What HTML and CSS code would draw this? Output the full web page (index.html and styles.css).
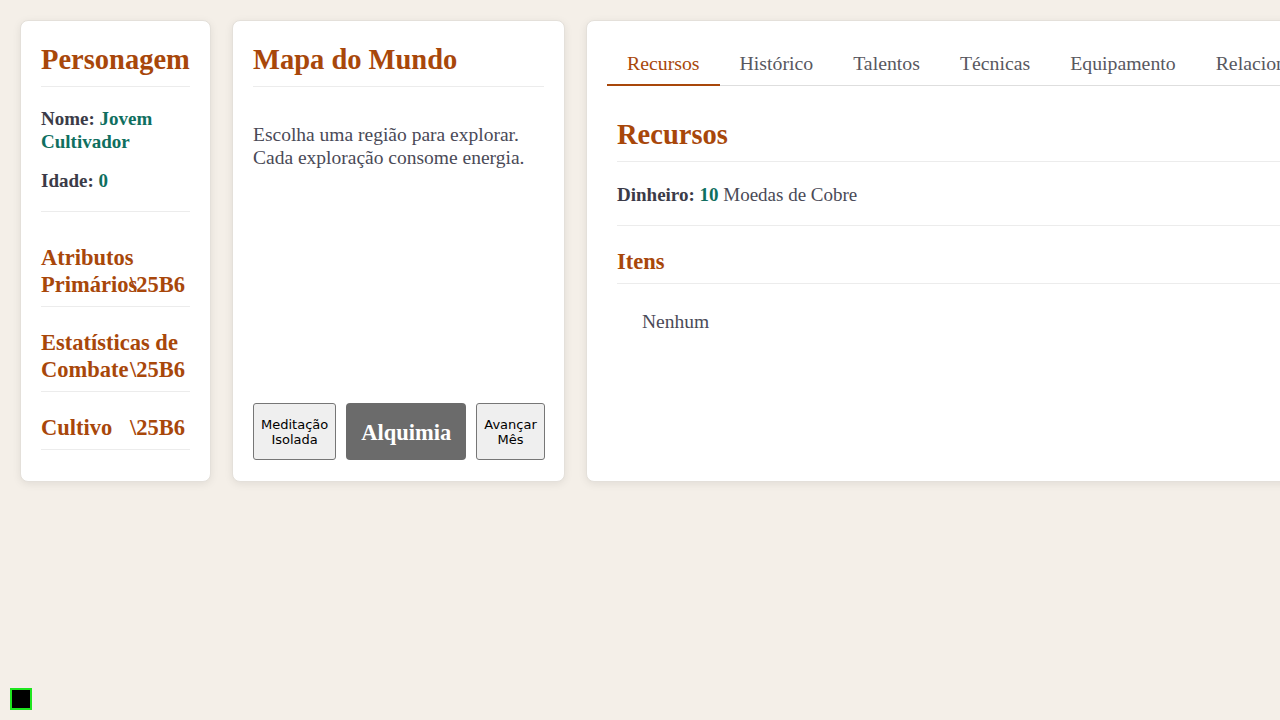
FILE: index.html
```html
<!DOCTYPE html>
<html lang="pt">
<head>
<meta charset="utf-8">
<title>Cultivo</title>
<link rel="stylesheet" href="styles.css">
</head>
<body>
<div class="layout">
  <aside class="card char">
    <h2 class="card-title">Personagem</h2>
    <div class="info">
      <p><b>Nome:</b> <span class="val">Jovem Cultivador</span></p>
      <p><b>Idade:</b> <span class="val">0</span></p>
    </div>
    <div class="section first"><h3>Atributos Primários</h3><span class="arrow">\25B6</span></div>
    <div class="section"><h3>Estatísticas de Combate</h3><span class="arrow">\25B6</span></div>
    <div class="section last"><h3>Cultivo</h3><span class="arrow">\25B6</span></div>
  </aside>

  <section class="card map">
    <h2 class="card-title">Mapa do Mundo</h2>
    <p class="map-text">Escolha uma região para explorar. Cada exploração consome energia.</p>
    <div class="actions">
      <button class="btn">Meditação<br>Isolada</button>
      <button class="btn-main">Alquimia</button>
      <button class="btn">Avançar<br>Mês</button>
    </div>
  </section>

  <main class="card panel">
    <nav class="tabs">
      <span class="tab active">Recursos</span>
      <span class="tab">Histórico</span>
      <span class="tab">Talentos</span>
      <span class="tab">Técnicas</span>
      <span class="tab">Equipamento</span>
      <span class="tab">Relacionamentos</span>
    </nav>
    <div class="tab-content">
      <h2 class="card-title big">Recursos</h2>
      <p class="money"><b>Dinheiro:</b> <span class="val">10</span> Moedas de Cobre</p>
      <h3 class="sub">Itens</h3>
      <ul class="items"><li>Nenhum</li></ul>
    </div>
  </main>
</div>
<div class="debug"></div>
</body>
</html>
```

FILE: styles.css
```css
html, body {
  margin: 0;
  padding: 0;
  background: #f4efe8;
  overflow: hidden;
  height: 100%;
}
body {
  font-family: "Liberation Serif", "Times New Roman", serif;
  font-size: 19px;
  color: #4a4a57;
}
.layout {
  display: grid;
  grid-template-columns: 191px 333px 760px;
  gap: 21px;
  padding: 20px;
  align-items: stretch;
}
.card {
  background: #fff;
  border: 1px solid #e4e0da;
  border-radius: 8px;
  box-shadow: 0 2px 8px rgba(0, 0, 0, 0.08);
  padding: 20px 20px 21px;
}
.card-title {
  margin: 0;
  font-size: 28.5px;
  line-height: 38px;
  font-weight: bold;
  color: #a8470a;
  padding-bottom: 7px;
  border-bottom: 1px solid #ececec;
}
b { color: #3b3b48; }
.val { color: #0f6f60; font-weight: bold; }
.info {
  margin-top: 20px;
  padding-bottom: 19px;
  border-bottom: 1px solid #ececec;
}
.info p {
  margin: 0 0 16px;
  line-height: 23px;
  font-weight: bold;
  color: #3b3b48;
}
.info p:last-child { margin-bottom: 0; }
.section {
  position: relative;
  margin-top: 22px;
  padding-bottom: 8px;
  border-bottom: 1px solid #ececec;
}
.section.first { margin-top: 32px; }
.section.last { margin-bottom: 10px; }
.section h3 {
  margin: 0;
  font-size: 22.5px;
  line-height: 27px;
  color: #a8470a;
}
.arrow {
  position: absolute;
  right: 5px;
  bottom: 8px;
  font-size: 22.5px;
  line-height: 27px;
  font-weight: bold;
  color: #a8470a;
}
.map {
  display: flex;
  flex-direction: column;
}
.map-text {
  margin: 36px 0 0;
  font-size: 19.5px;
  line-height: 23px;
}
.actions {
  margin-top: auto;
  display: flex;
  gap: 10px;
  align-items: stretch;
}
.btn {
  font-family: "DejaVu Sans", sans-serif;
  font-size: 13px;
  line-height: 15px;
  color: #000;
  background: #efefef;
  border: 1px solid #767676;
  border-radius: 3px;
  padding: 0 7px;
}
.btn-main {
  font-family: "Liberation Serif", serif;
  font-size: 22.5px;
  font-weight: bold;
  line-height: 25px;
  color: #fff;
  background: #6b6b6b;
  border: none;
  border-radius: 4px;
  padding: 17px 15px 15px;
}
.panel {
  padding-right: 0;
  overflow: hidden;
}
.tabs {
  display: flex;
  border-bottom: 1px solid #dedede;
  white-space: nowrap;
}
.tab {
  padding: 10px 20px 9px;
  line-height: 24px;
  font-size: 19.8px;
  color: #585860;
  border-bottom: 2px solid transparent;
  margin-bottom: -1px;
}
.tab.active {
  color: #a8470a;
  border-bottom-color: #a8470a;
}
.tab-content {
  padding: 30px 0 20px 10px;
}
.money {
  margin: 21px 0 0;
  line-height: 23px;
  padding-bottom: 19px;
  border-bottom: 1px solid #ececec;
}
.sub {
  margin: 22px 0 0;
  font-size: 22.5px;
  line-height: 27px;
  color: #a8470a;
  padding-bottom: 8px;
  border-bottom: 1px solid #ececec;
}
.items {
  list-style: none;
  margin: 26px 0 0;
  padding-left: 25px;
  font-size: 19.5px;
  line-height: 23px;
}
.debug {
  position: fixed;
  left: 10px;
  bottom: 10px;
  width: 18px;
  height: 18px;
  background: #000;
  border: 2px solid #1fe51f;
}
```
